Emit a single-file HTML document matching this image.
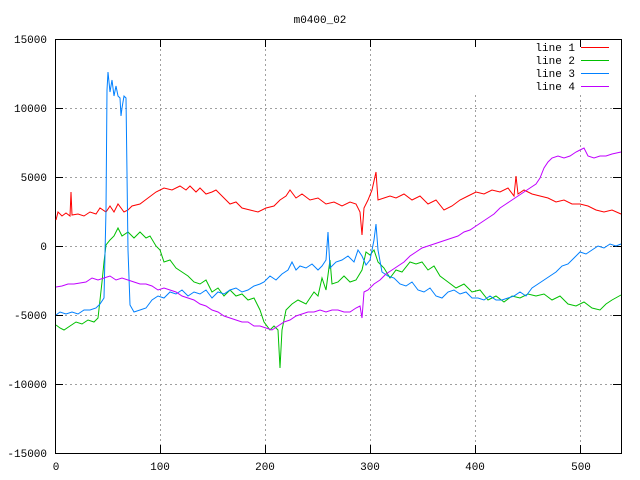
<!DOCTYPE html>
<html><head><meta charset="utf-8"><style>
html,body{margin:0;padding:0;background:#fff}
svg{display:block}
text{font-family:"Liberation Mono","DejaVu Sans Mono",monospace;font-size:11px;fill:#000}
</style></head><body>
<svg width="640" height="480" viewBox="0 0 640 480" xmlns="http://www.w3.org/2000/svg">
<g stroke="#a0a0a0" stroke-dasharray="2,3" stroke-width="1">
<line x1="55" y1="108.5" x2="621" y2="108.5"/>
<line x1="55" y1="177.5" x2="621" y2="177.5"/>
<line x1="55" y1="246.5" x2="621" y2="246.5"/>
<line x1="55" y1="315.5" x2="621" y2="315.5"/>
<line x1="55" y1="384.5" x2="621" y2="384.5"/>
<line x1="160.5" y1="39" x2="160.5" y2="453"/>
<line x1="265.5" y1="39" x2="265.5" y2="453"/>
<line x1="370.5" y1="39" x2="370.5" y2="453"/>
<line x1="475.5" y1="95" x2="475.5" y2="453"/>
<line x1="580.5" y1="95" x2="580.5" y2="453"/>
</g>
<g stroke="#000" stroke-width="1" fill="none">
<rect x="55.5" y="39.5" width="566" height="414"/>
<path d="M55 108.5h8M55 177.5h8M55 246.5h8M55 315.5h8M55 384.5h8M621 108.5h-8M621 177.5h-8M621 246.5h-8M621 315.5h-8M621 384.5h-8M160.5 453v-8M265.5 453v-8M370.5 453v-8M475.5 453v-8M580.5 453v-8M160.5 39v8M265.5 39v8M370.5 39v8M475.5 39v8M580.5 39v8"/>
</g>
<g text-anchor="end">
<text x="47" y="43">15000</text><text x="47" y="112">10000</text><text x="47" y="181">5000</text>
<text x="47" y="250">0</text><text x="47" y="319">-5000</text><text x="47" y="388">-10000</text><text x="47" y="457">-15000</text>
</g>
<g text-anchor="middle">
<text x="56" y="470">0</text><text x="160" y="470">100</text><text x="265" y="470">200</text>
<text x="370" y="470">300</text><text x="475" y="470">400</text><text x="581" y="470">500</text>
<text x="320" y="23">m0400_02</text>
</g>
<g text-anchor="end">
<text x="575" y="51">line 1</text><text x="575" y="64">line 2</text><text x="575" y="77">line 3</text><text x="575" y="90">line 4</text>
</g>
<rect x="581" y="47" width="28" height="1" fill="#ff0000"/>
<rect x="581" y="60" width="28" height="1" fill="#00c000"/>
<rect x="581" y="73" width="28" height="1" fill="#0080ff"/>
<rect x="581" y="86" width="28" height="1" fill="#c000ff"/>
<g stroke-width="1" fill="none">
<polyline stroke="#ff0000" points="56,220 58,212 62,216 66,213 70,216 71,192 72,215 78,214 84,216 90,212 96,214 100,208 106,212 110,206 114,212 118,204 124,212 128,210 132,206 140,204 148,198 156,192 164,188 172,190 180,186 186,190 190,186 196,192 200,188 206,194 212,192 216,190 222,196 230,204 236,202 242,208 250,210 258,212 266,208 274,206 280,200 286,196 290,190 296,198 302,194 310,200 318,198 326,204 334,202 342,206 350,202 356,204 360,212 362,235 364,208 368,200 372,190 376,172 378,200 384,198 390,196 396,198 404,194 412,200 420,196 428,204 436,200 444,210 452,206 460,200 468,196 476,192 484,194 492,190 500,192 508,188 514,196 516,176 518,194 524,190 532,194 540,196 548,198 556,202 564,200 572,204 580,204 588,206 596,210 604,212 612,210 621,214"/>
<polyline stroke="#00c000" points="56,325 60,328 64,330 70,326 76,322 82,324 88,320 94,322 98,318 100,300 102,282 104,262 106,245 110,240 114,236 118,228 122,236 128,232 134,238 140,232 146,238 150,236 156,246 160,250 164,262 170,260 176,268 182,272 188,276 194,282 200,284 206,280 212,292 218,288 224,296 230,290 236,296 242,294 248,300 254,298 260,310 264,322 270,330 274,326 278,330 280,368 282,330 286,310 292,304 298,300 306,304 314,292 318,296 322,278 326,290 330,260 332,284 338,282 344,276 350,282 356,280 362,270 366,252 370,255 374,250 378,262 384,268 390,278 396,270 402,272 410,262 416,264 422,262 428,270 434,266 440,276 448,282 456,288 464,284 472,292 480,290 488,300 496,296 504,302 512,296 520,298 528,294 536,296 544,294 552,300 560,296 568,304 576,306 584,302 592,308 600,310 606,304 612,300 621,295"/>
<polyline stroke="#0080ff" points="56,315 60,312 66,314 72,312 78,314 84,310 90,310 96,308 100,304 104,298 106,210 107,90 108,72 110,92 112,80 114,96 116,86 118,96 120,98 121,116 122,108 124,96 126,98 128,250 130,305 134,312 140,310 146,308 152,300 158,296 164,298 170,292 176,294 182,290 188,296 194,292 200,294 206,290 212,298 218,292 224,294 230,290 236,288 242,292 248,290 254,286 260,284 264,282 270,276 276,280 282,274 288,270 292,262 296,270 300,266 306,268 312,264 318,270 322,266 326,260 328,232 330,268 336,262 342,260 348,256 354,262 358,250 362,256 366,265 370,260 374,240 376,224 378,250 382,272 388,276 394,278 400,284 406,286 412,282 418,290 424,292 430,288 436,296 442,298 448,292 454,290 460,294 466,292 472,298 478,298 484,300 490,296 496,300 502,300 508,298 514,296 520,292 526,296 532,288 538,284 544,280 550,276 556,272 562,266 568,264 574,258 580,252 586,254 592,250 598,246 604,248 610,244 616,246 621,244"/>
<polyline stroke="#c000ff" points="56,287 62,286 68,284 74,284 80,283 86,282 92,278 98,280 104,278 110,276 116,280 122,278 128,280 134,282 140,284 146,284 152,286 158,290 164,288 170,290 176,292 182,296 188,298 194,300 200,304 206,306 212,310 218,312 224,316 230,318 236,320 242,322 248,322 254,326 260,326 266,328 272,330 278,326 284,322 290,320 296,316 302,314 308,312 314,312 320,310 326,312 332,310 338,310 344,312 350,312 356,308 360,306 362,318 364,292 368,290 374,284 380,280 386,274 392,270 398,266 404,262 410,256 416,252 422,248 428,246 434,244 440,242 446,240 452,238 458,236 464,232 470,230 476,226 482,222 488,218 494,214 500,208 506,204 512,200 518,196 524,192 530,188 536,184 540,178 544,168 548,162 552,158 558,156 564,158 570,156 576,152 580,150 584,148 588,156 594,158 600,156 606,156 612,154 621,152"/>
</g>
</svg>
</body></html>
